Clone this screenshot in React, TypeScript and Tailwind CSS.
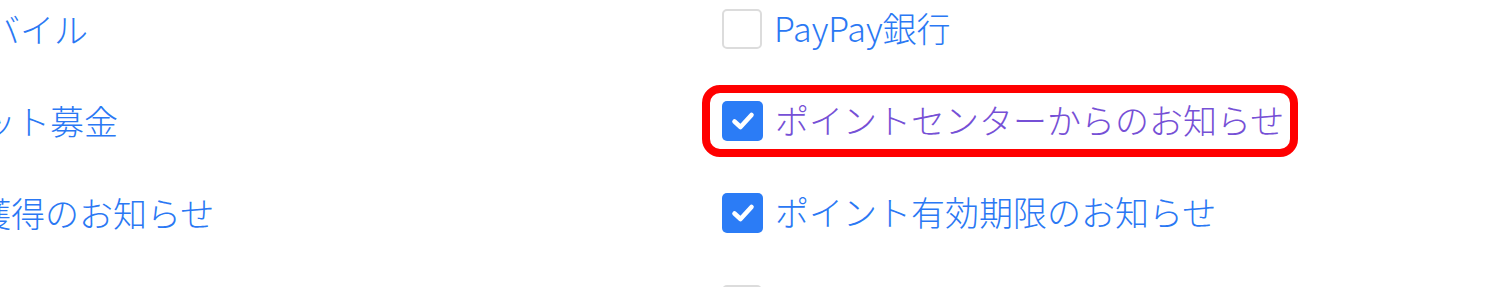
import React from "react";

const FONT = { fontFamily: '"Noto Sans CJK JP", "Noto Sans", sans-serif' };

function Box({ checked }: { checked: boolean }) {
  if (checked) {
    return (
      <span className="flex h-[40px] w-[41px] shrink-0 items-center justify-center rounded-[5px] bg-[#2b7cf6]">
        <svg width="24" height="20" viewBox="0 0 24 20" fill="none">
          <path d="M3.5 10.5 L9.5 16 L20.5 4" stroke="white" strokeWidth="4.6" strokeLinecap="round" strokeLinejoin="round" />
        </svg>
      </span>
    );
  }
  return <span className="block h-[40px] w-[40px] shrink-0 rounded-[5px] border-2 border-[#dcdcdc] bg-white" />;
}

export default function App() {
  const rows: { left?: string; leftMl: string; right: string; checked: boolean; purple?: boolean; mark?: boolean }[] = [
    { left: "バイル", leftMl: "ml-[-14px]", right: "PayPay銀行", checked: false },
    { left: "ット募金", leftMl: "ml-[-18px]", right: "ポイントセンターからのお知らせ", checked: true, purple: true, mark: true },
    { left: "獲得のお知らせ", leftMl: "ml-[-23px]", right: "ポイント有効期限のお知らせ", checked: true },
    { leftMl: "ml-0", right: "", checked: false },
  ];
  return (
    <div className="h-[287px] w-[1500px] overflow-hidden bg-white" style={FONT}>
      <div className="mt-[-17px] flex flex-col">
        {rows.map((r, i) => (
          <div key={i} className="grid h-[92px] grid-cols-[722px_1fr] items-center">
            <div className="flex items-center">
              {r.left && (
                <span className={`${r.leftMl} whitespace-nowrap text-[34px] font-light leading-none text-[#2a78f4]`}>{r.left}</span>
              )}
            </div>
            <div className="relative flex items-center gap-[12px]">
              {r.mark && (
                <div className="pointer-events-none absolute left-[-20px] top-1/2 h-[72px] w-[596px] -translate-y-1/2 rounded-[18px] border-[8px] border-[#ff0000]" />
              )}
              <Box checked={r.checked} />
              {r.right && (
                <span
                  className={`mt-[-3px] whitespace-nowrap text-[34px] font-light leading-none ${r.purple ? "text-[#7650d6]" : "text-[#2a78f4]"}`}
                >
                  {r.right}
                </span>
              )}
            </div>
          </div>
        ))}
      </div>
    </div>
  );
}
